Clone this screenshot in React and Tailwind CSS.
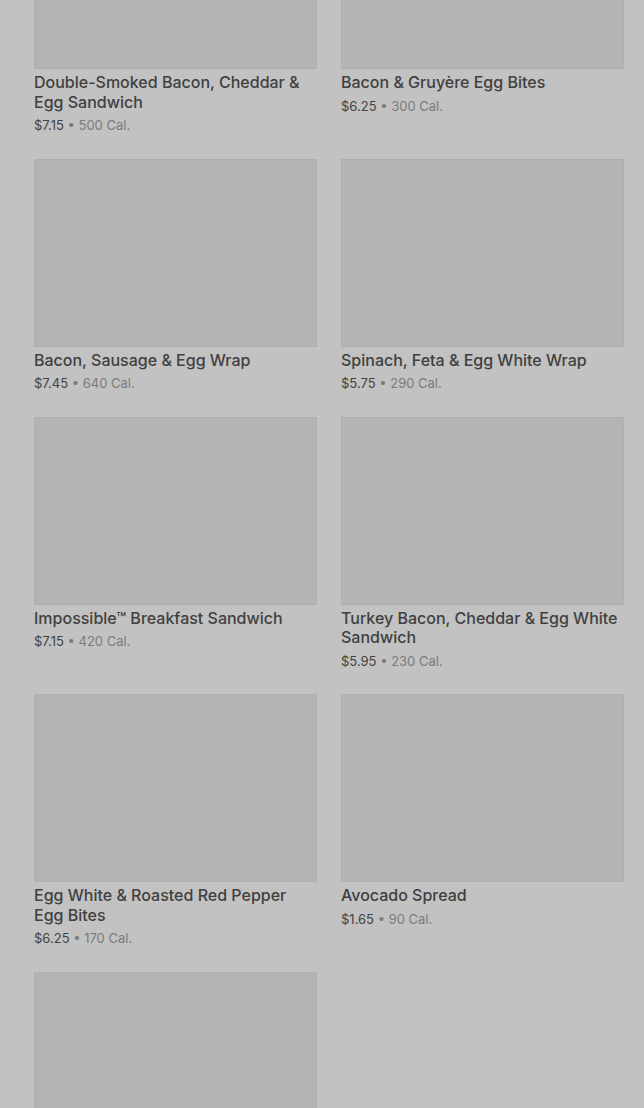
import React from 'react';

const items = [
  { name: 'Double-Smoked Bacon, Cheddar & Egg Sandwich', price: '$7.15', cal: '500 Cal.' },
  { name: 'Bacon & Gruyère Egg Bites', price: '$6.25', cal: '300 Cal.' },
  { name: 'Bacon, Sausage & Egg Wrap', price: '$7.45', cal: '640 Cal.' },
  { name: 'Spinach, Feta & Egg White Wrap', price: '$5.75', cal: '290 Cal.' },
  { name: 'Impossible™ Breakfast Sandwich', price: '$7.15', cal: '420 Cal.' },
  { name: 'Turkey Bacon, Cheddar & Egg White Sandwich', price: '$5.95', cal: '230 Cal.' },
  { name: 'Egg White & Roasted Red Pepper Egg Bites', price: '$6.25', cal: '170 Cal.' },
  { name: 'Avocado Spread', price: '$1.65', cal: '90 Cal.' },
  { name: '', price: '', cal: '' },
];

function ProductCard({ item }) {
  return (
    <div className="flex flex-col">
      <div className="h-[188px] w-full bg-[#b4b4b4] border border-[#afafaf]" />
      {item.name && (
        <>
          <h3 className="mt-[4px] text-[16px] leading-[19.5px] font-medium text-[#404040]">
            {item.name}
          </h3>
          <p className="mt-[3px] text-[13px] leading-[20px] text-[#424242]">
            {item.price}
            <span className="text-[#7b7b7b]"> • {item.cal}</span>
          </p>
        </>
      )}
    </div>
  );
}

export default function App() {
  return (
    <div
      className="h-[1108px] w-full overflow-hidden bg-[#c2c2c2]"
      style={{ fontFamily: 'Inter, "Noto Sans", sans-serif' }}
    >
      <div className="-mt-[119px] grid grid-cols-2 gap-x-6 gap-y-[23.5px] pl-[34px] pr-[20px]">
        {items.map((item, i) => (
          <ProductCard key={i} item={item} />
        ))}
      </div>
    </div>
  );
}
